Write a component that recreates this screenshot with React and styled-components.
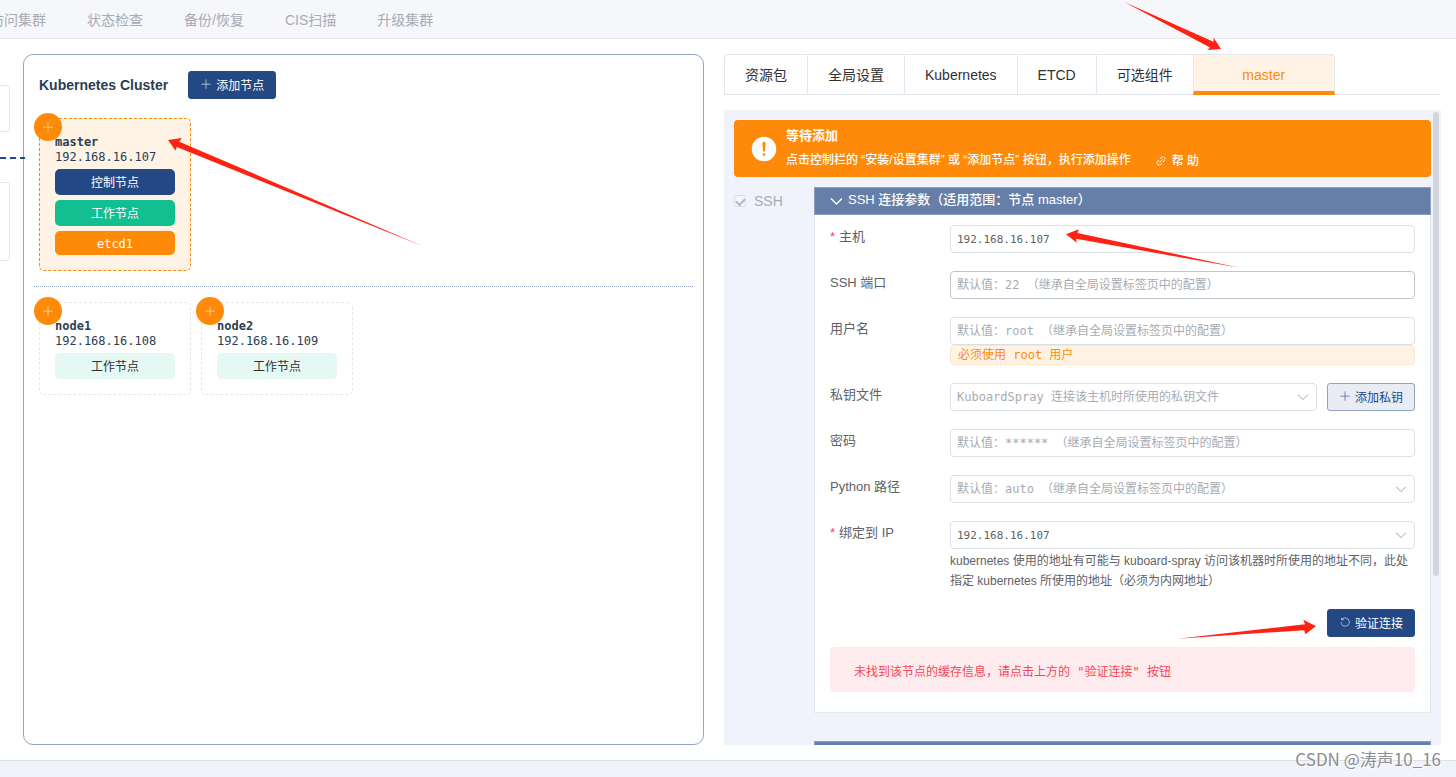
import React from 'react';
import styled, { createGlobalStyle } from 'styled-components';

const sans = '"Liberation Sans", Arial, "Noto Sans CJK SC", sans-serif';
const mono = '"DejaVu Sans Mono", "Noto Sans CJK SC", monospace';

const GlobalStyle = createGlobalStyle`
  * {
    box-sizing: border-box;
  }
  body {
    margin: 0;
    font-family: ${sans};
    font-size: 14px;
    color: #2c3e50;
    background: #fff;
  }
  button, input, select {
    margin: 0;
    font-family: inherit;
  }
`;

const paths = {
  plus: 'M480 480V128a32 32 0 0 1 64 0v352h352a32 32 0 1 1 0 64H544v352a32 32 0 1 1-64 0V544H128a32 32 0 0 1 0-64h352z',
  down: 'M831.872 340.864 512 652.672 192.128 340.864a30.592 30.592 0 0 0-42.752 0 29.12 29.12 0 0 0 0 41.6L489.664 714.24a32 32 0 0 0 44.672 0l340.288-331.712a29.12 29.12 0 0 0 0-41.728 30.592 30.592 0 0 0-42.752 0z',
  link: 'M715.648 625.152 670.4 579.904l90.496-90.56c75.008-74.944 85.12-186.368 22.656-248.896-62.528-62.464-173.952-52.352-248.96 22.656L444.16 353.6l-45.248-45.248 90.496-90.496c100.032-99.968 251.968-110.08 339.456-22.656 87.488 87.488 77.312 239.424-22.656 339.456l-90.496 90.496zm-90.496 90.496-90.496 90.496C434.624 906.112 282.688 916.224 195.2 828.8c-87.488-87.488-77.312-239.424 22.656-339.456l90.496-90.496 45.248 45.248-90.496 90.56c-75.008 74.944-85.12 186.368-22.656 248.896 62.528 62.464 173.952 52.352 248.96-22.656l90.496-90.496 45.248 45.248zm0-362.048 45.248 45.248L398.848 670.4 353.6 625.152 625.152 353.6z',
  refresh: 'M289.088 296.704h92.992a32 32 0 0 1 0 64H232.96a32 32 0 0 1-32-32V179.712a32 32 0 0 1 64 0v50.56a384 384 0 0 1 643.84 282.88 384 384 0 0 1-383.936 384 384 384 0 0 1-384-384h64a320 320 0 1 0 640 0 320 320 0 0 0-555.712-216.448z',
  warning: 'M512 64a448 448 0 1 1 0 896 448 448 0 0 1 0-896zm0 192a58.432 58.432 0 0 0-58.24 63.744l23.36 256.384a35.072 35.072 0 0 0 69.76 0l23.296-256.384A58.432 58.432 0 0 0 512 256zm0 512a51.2 51.2 0 1 0 0-102.4 51.2 51.2 0 0 0 0 102.4z',
};

function Icon(props) {
  const size = props.size || 12;
  return <svg className={props.className} width={size} height={size}
              viewBox="0 0 1024 1024" fill="currentColor" aria-hidden="true">
    <path d={paths[props.name]} />
  </svg>;
}

const Page = styled.div`
  position: relative;
  display: flex;
  flex-direction: column;
  height: 100vh;
  overflow: hidden;
`;

const TopBar = styled.nav`
  display: flex;
  flex: none;
  align-items: center;
  gap: 41px;
  height: 39px;
  margin-left: -10px;
  padding-top: 2px;
  border-bottom: 1px solid #e4e7ed;
  background: #f5f7fb;
`;

const TopButton = styled.button`
  flex: none;
  padding: 0;
  border: 0;
  background: none;
  color: #a8abb2;
  font-size: 14px;
  line-height: 20px;
`;

const Main = styled.main`
  flex: 1;
  min-height: 0;
  display: grid;
  grid-template-columns: 23px minmax(0, 681fr) 20px minmax(0, 717fr);
  grid-template-rows: minmax(0, 1fr);
  padding: 15px 15px 15px 0;
`;

const Footer = styled.footer`
  flex: none;
  height: 17px;
  border-top: 1px solid #dcdfe6;
  background: #f0f3fb;
`;

const Stub = styled.div`
  display: flex;
  flex-direction: column;
  padding-top: 31px;
  z-index: 1;
`;

const StubBox = styled.div`
  width: 10px;
  height: ${props => props.$height}px;
  border: 1px solid #e4e7ed;
  border-left: 0;
  border-radius: 0 4px 4px 0;
`;

const StubLink = styled.div`
  width: 25px;
  height: 2px;
  margin: 25px 0 23px;
  background: repeating-linear-gradient(90deg, #234883 0 6px, transparent 6px 10px);
`;

const Cluster = styled.section`
  padding: 16px 10px;
  border: 1px solid #92a4c8;
  border-radius: 10px;
`;

const ClusterHead = styled.div`
  display: flex;
  align-items: center;
  gap: 20px;
  padding: 0 5px;
`;

const ClusterTitle = styled.h1`
  margin: 0;
  font-size: 14px;
  line-height: 20px;
  font-weight: bold;
`;

const Button = styled.button`
  display: inline-flex;
  flex: none;
  align-items: center;
  justify-content: center;
  gap: 4px;
  height: 28px;
  padding: 0 11px 2px;
  border: 1px solid ${props => (props.$plain ? '#91a3c1' : '#234883')};
  border-radius: 3px;
  background: ${props => (props.$plain ? '#e9edf3' : '#234883')};
  color: ${props => (props.$plain ? '#234883' : '#fff')};
  font-size: 12px;
  cursor: pointer;
  svg {
    opacity: 0.8;
  }
`;

const NodeRow = styled.div`
  display: flex;
  gap: 10px;
  padding: ${props => (props.$first ? '19px 5px 15px' : '15px 5px')};
  border-bottom: ${props => (props.$first ? '1px dotted #91a3c1' : '0')};
`;

const Card = styled.article`
  position: relative;
  display: flex;
  flex-direction: column;
  gap: 5px;
  width: 152px;
  padding: 15px;
  border: 1px dashed ${props => (props.$active ? '#ff8a09' : '#e4e7ed')};
  border-radius: 5px;
  background: ${props => (props.$active ? '#fff3e6' : '#fff')};
  font-family: ${mono};
  font-size: 12px;
  line-height: 15px;
`;

const CardAdd = styled.button`
  position: absolute;
  top: -6px;
  left: -6px;
  display: flex;
  align-items: center;
  justify-content: center;
  width: 28px;
  height: 28px;
  padding: 0;
  border: 0;
  border-radius: 50%;
  background: #ff8a09;
  color: #ffd9b0;
`;

const CardHead = styled.div`
  height: 30px;
  padding-top: 1px;
`;

const Name = styled.div`
  height: 15px;
  font-weight: bold;
`;

const Address = styled.div`
  height: 15px;
`;

const roleStyles = {
  control: ['#234883', '#fff', 26],
  worker: ['#12bf91', '#fff', 26],
  etcd: ['#ff8a09', '#fff', 24],
  pending: ['#e6f8f4', '#303133', 26],
};

const Role = styled.div`
  height: ${props => roleStyles[props.$kind][2]}px;
  padding-top: 1px;
  line-height: ${props => roleStyles[props.$kind][2]}px;
  border-radius: 5px;
  background: ${props => roleStyles[props.$kind][0]};
  color: ${props => roleStyles[props.$kind][1]};
  text-align: center;
`;

const Side = styled.section`
  grid-column: 4;
  display: flex;
  flex-direction: column;
  gap: 15px;
  min-height: 0;
`;

const Tabs = styled.div`
  display: flex;
  flex: none;
  height: 41px;
  border-bottom: 1px solid #e4e7ed;
`;

const Tab = styled.button`
  height: 41px;
  min-width: ${props => (props.$active ? '142px' : '0')};
  padding: ${props => (props.$active ? '3px 20px 0' : '0 20px')};
  border: 1px solid #e4e7ed;
  border-right-width: ${props => (props.$active ? '1px' : '0')};
  border-bottom: ${props => (props.$active ? '4px solid #ff8a09' : '1px solid #e4e7ed')};
  border-radius: ${props => (props.$active ? '0 4px 0 0' : '0')};
  background: ${props => (props.$active ? '#fff3e6' : '#fff')};
  color: ${props => (props.$active ? '#ff8a09' : '#303133')};
  font-size: 14px;
  line-height: 20px;
  &:first-child {
    border-top-left-radius: 4px;
  }
`;

const Scroll = styled.div`
  position: relative;
  flex: 1;
  min-height: 0;
  overflow: hidden;
  padding: 10px;
  background: #f0f3fb;
`;

const Thumb = styled.div`
  position: absolute;
  top: 2px;
  right: 2px;
  width: 6px;
  height: 73%;
  border-radius: 3px;
  background: #d2d5de;
`;

const Notice = styled.div`
  display: flex;
  align-items: center;
  gap: 8px;
  height: 57px;
  padding: 0 16px;
  border-radius: 4px;
  background: #ff8a09;
  color: #fff;
`;

const NoticeTitle = styled.div`
  font-size: 13px;
  line-height: 22px;
  font-weight: bold;
`;

const NoticeText = styled.div`
  display: flex;
  align-items: center;
  gap: 24px;
  font-size: 12px;
  line-height: 24px;
  font-weight: 500;
`;

const HelpLink = styled.a`
  display: flex;
  align-items: center;
  gap: 5px;
  padding-top: 2px;
  color: #fff;
  text-decoration: none;
`;

const Group = styled.div`
  display: grid;
  grid-template-columns: 80px minmax(0, 1fr);
  margin-top: 10px;
`;

const Toggle = styled.label`
  display: flex;
  align-items: center;
  align-self: start;
  gap: 8px;
  height: 27px;
  color: #a8abb2;
`;

const Tick = styled.input`
  appearance: none;
  width: 12px;
  height: 12px;
  border: 1px solid #dcdfe6;
  border-radius: 2px;
  background: #f2f6fc;
  &:checked::after {
    content: '';
    display: block;
    width: 7px;
    height: 4px;
    margin: 2px 1px;
    border: solid #b4b7bf;
    border-width: 0 0 2px 2px;
    transform: rotate(-45deg);
  }
`;

const SectionHead = styled.h2`
  display: flex;
  align-items: center;
  gap: 6px;
  height: 28px;
  margin: 0;
  padding: 0 15px 3px;
  border: 1px solid #8c9fc0;
  background: #667fa9;
  color: #fff;
  font-size: 13px;
  line-height: 20px;
  font-weight: 500;
  svg {
    margin-top: 3px;
  }
`;

const SectionBody = styled.form`
  padding: 10px 15px 20px;
  border: 1px solid #e4e7ed;
  border-top: 0;
  background: #fff;
`;

const NextHead = styled(SectionHead)`
  margin: 28px 0 0 80px;
`;

const Field = styled.div`
  display: grid;
  grid-template-columns: 120px minmax(0, 1fr);
  margin-bottom: 18px;
`;

const Label = styled.label`
  padding-top: 1px;
  color: #606266;
  font-size: 13px;
  line-height: 22px;
`;

const Star = styled.span`
  margin-right: 4px;
  color: #f5465c;
`;

const Line = styled.div`
  display: flex;
  gap: 10px;
`;

const Input = styled.input`
  display: block;
  width: 100%;
  height: 28px;
  padding: 0 6px;
  border: 1px solid ${props => (props.$hovered ? '#c0c4cc' : '#dcdfe6')};
  border-radius: 4px;
  outline: 0;
  background: #fff;
  color: #606266;
  font-family: ${mono};
  font-size: 11px;
  &::placeholder {
    color: #a8abb2;
    font-size: 12px;
  }
`;

const SelectBox = styled.div`
  position: relative;
  flex: 1;
  min-width: 0;
`;

const Select = styled.select`
  display: block;
  appearance: none;
  width: 100%;
  height: 28px;
  padding: 0 26px 0 6px;
  border: 1px solid #dcdfe6;
  border-radius: 4px;
  background: #fff;
  color: ${props => (props.$empty ? '#a8abb2' : '#606266')};
  font-family: ${mono};
  font-size: ${props => (props.$empty ? '12px' : '11px')};
`;

const SelectArrow = styled(Icon)`
  position: absolute;
  top: 7px;
  right: 7px;
  color: #a8abb2;
  pointer-events: none;
`;

const Warn = styled.div`
  height: 20px;
  padding: 0 7px;
  border: 1px solid #ffe4c8;
  border-radius: 4px;
  background: #fff3e6;
  color: #ff8a09;
  font-family: ${mono};
  font-size: 12px;
  line-height: 18px;
`;

const Help = styled.p`
  margin: 2px 0 0;
  color: #606266;
  font-size: 12px;
  line-height: 20px;
`;

const Actions = styled.div`
  display: flex;
  justify-content: flex-end;
  margin-bottom: 10px;
`;

const ErrorBox = styled.div`
  padding: 15px 24px 10px;
  border-radius: 4px;
  background: #feebee;
  color: #f5465c;
  font-family: ${mono};
  font-size: 12px;
  line-height: 20px;
`;

const Overlay = styled.svg`
  position: absolute;
  top: 0;
  left: 0;
  z-index: 2;
  pointer-events: none;
`;

const Watermark = styled.div`
  position: absolute;
  right: 15px;
  bottom: 6px;
  z-index: 3;
  color: #8c8d90;
  font-family: "Noto Sans CJK SC", sans-serif;
  font-size: 17px;
  line-height: 24px;
  text-shadow: 1px 1px 0 #fff;
`;

const actions = ['访问集群', '状态检查', '备份/恢复', 'CIS扫描', '升级集群'];
const tabs = ['资源包', '全局设置', 'Kubernetes', 'ETCD', '可选组件', 'master'];

function NodeCard(props) {
  return <Card $active={props.active}>
    <CardHead>
      <Name>{props.name}</Name>
      <Address>{props.ip}</Address>
    </CardHead>
    {props.roles.map(([kind, label]) => <Role key={kind} $kind={kind}>{label}</Role>)}
    <CardAdd type="button" aria-label="add"><Icon name="plus" /></CardAdd>
  </Card>;
}

function FormField(props) {
  return <Field>
    <Label htmlFor={props.id}>
      {props.required && <Star>*</Star>}{props.label}
    </Label>
    <div>{props.children}</div>
  </Field>;
}

function Dropdown(props) {
  return <SelectBox>
    <Select id={props.id} $empty={props.empty}>
      <option>{props.text}</option>
    </Select>
    <SelectArrow name="down" size={14} />
  </SelectBox>;
}

function Chevron() {
  return <svg width="12" height="12" viewBox="0 0 12 12" fill="none"
              stroke="currentColor" strokeWidth="1.5" aria-hidden="true">
    <path d="M1 3.5L6.5 9L12 3.5" />
  </svg>;
}

function Arrows() {
  return <Overlay width="100%" height="100%" fill="#ff2213" aria-hidden="true">
    <path d="M168 140L181.8 138L179.3 141.7L424 246.7L176.8 147L175.5 150.5Z" />
    <path d="M1221 49L1213.7 37.7L1213.5 41.8L1124.3 2L1210 47.5L1207.3 50Z" />
    <path d="M1066 234.3L1078.8 229.3L1077.5 233L1239.3 267.7L1076 238.8L1076.8 242.8Z" />
    <path d="M1316 626.3L1303.3 619.8L1305 624.2L1177.5 638.7L1304.3 630.2L1305.3 634.2Z" />
  </Overlay>;
}

export default function App() {
  return <Page>
    <GlobalStyle />
    <TopBar>
      {actions.map(label => <TopButton key={label} type="button">{label}</TopButton>)}
    </TopBar>
    <Main>
      <Stub>
        <StubBox $height={47} />
        <StubLink />
        <StubBox $height={79} />
      </Stub>
      <Cluster>
        <ClusterHead>
          <ClusterTitle>Kubernetes Cluster</ClusterTitle>
          <Button type="button"><Icon name="plus" />添加节点</Button>
        </ClusterHead>
        <NodeRow $first>
          <NodeCard active name="master" ip="192.168.16.107"
            roles={[['control', '控制节点'], ['worker', '工作节点'], ['etcd', 'etcd1']]} />
        </NodeRow>
        <NodeRow>
          <NodeCard name="node1" ip="192.168.16.108" roles={[['pending', '工作节点']]} />
          <NodeCard name="node2" ip="192.168.16.109" roles={[['pending', '工作节点']]} />
        </NodeRow>
      </Cluster>
      <Side>
        <Tabs role="tablist">
          {tabs.map(label => <Tab key={label} type="button" role="tab"
            aria-selected={label === 'master'} $active={label === 'master'}>{label}</Tab>)}
        </Tabs>
        <Scroll>
          <Notice>
            <Icon name="warning" size={28} />
            <div>
              <NoticeTitle>等待添加</NoticeTitle>
              <NoticeText>
                点击控制栏的 “安装/设置集群” 或 “添加节点” 按钮，执行添加操作
                <HelpLink href="#help"><Icon name="link" />帮 助</HelpLink>
              </NoticeText>
            </div>
          </Notice>
          <Group>
            <Toggle><Tick type="checkbox" defaultChecked disabled />SSH</Toggle>
            <div>
              <SectionHead><Chevron />SSH 连接参数（适用范围：节点 master）</SectionHead>
              <SectionBody>
                <FormField id="host" label="主机" required>
                  <Input id="host" defaultValue="192.168.16.107" />
                </FormField>
                <FormField id="port" label="SSH 端口">
                  <Input id="port" $hovered placeholder="默认值：22 （继承自全局设置标签页中的配置）" />
                </FormField>
                <FormField id="user" label="用户名">
                  <Input id="user" placeholder="默认值：root （继承自全局设置标签页中的配置）" />
                  <Warn>必须使用 root 用户</Warn>
                </FormField>
                <FormField id="key" label="私钥文件">
                  <Line>
                    <Dropdown id="key" empty text="KuboardSpray 连接该主机时所使用的私钥文件" />
                    <Button type="button" $plain><Icon name="plus" />添加私钥</Button>
                  </Line>
                </FormField>
                <FormField id="password" label="密码">
                  <Input id="password" type="password" placeholder="默认值：****** （继承自全局设置标签页中的配置）" />
                </FormField>
                <FormField id="python" label="Python 路径">
                  <Dropdown id="python" empty text="默认值：auto （继承自全局设置标签页中的配置）" />
                </FormField>
                <FormField id="ip" label="绑定到 IP" required>
                  <Dropdown id="ip" text="192.168.16.107" />
                  <Help>kubernetes 使用的地址有可能与 kuboard-spray 访问该机器时所使用的地址不同，此处指定 kubernetes 所使用的地址（必须为内网地址）</Help>
                </FormField>
                <Actions>
                  <Button type="button"><Icon name="refresh" />验证连接</Button>
                </Actions>
                <ErrorBox role="alert">未找到该节点的缓存信息，请点击上方的 "验证连接" 按钮</ErrorBox>
              </SectionBody>
            </div>
          </Group>
          <NextHead />
          <Thumb />
        </Scroll>
      </Side>
    </Main>
    <Footer />
    <Arrows />
    <Watermark>CSDN @涛声10_16</Watermark>
  </Page>;
}
